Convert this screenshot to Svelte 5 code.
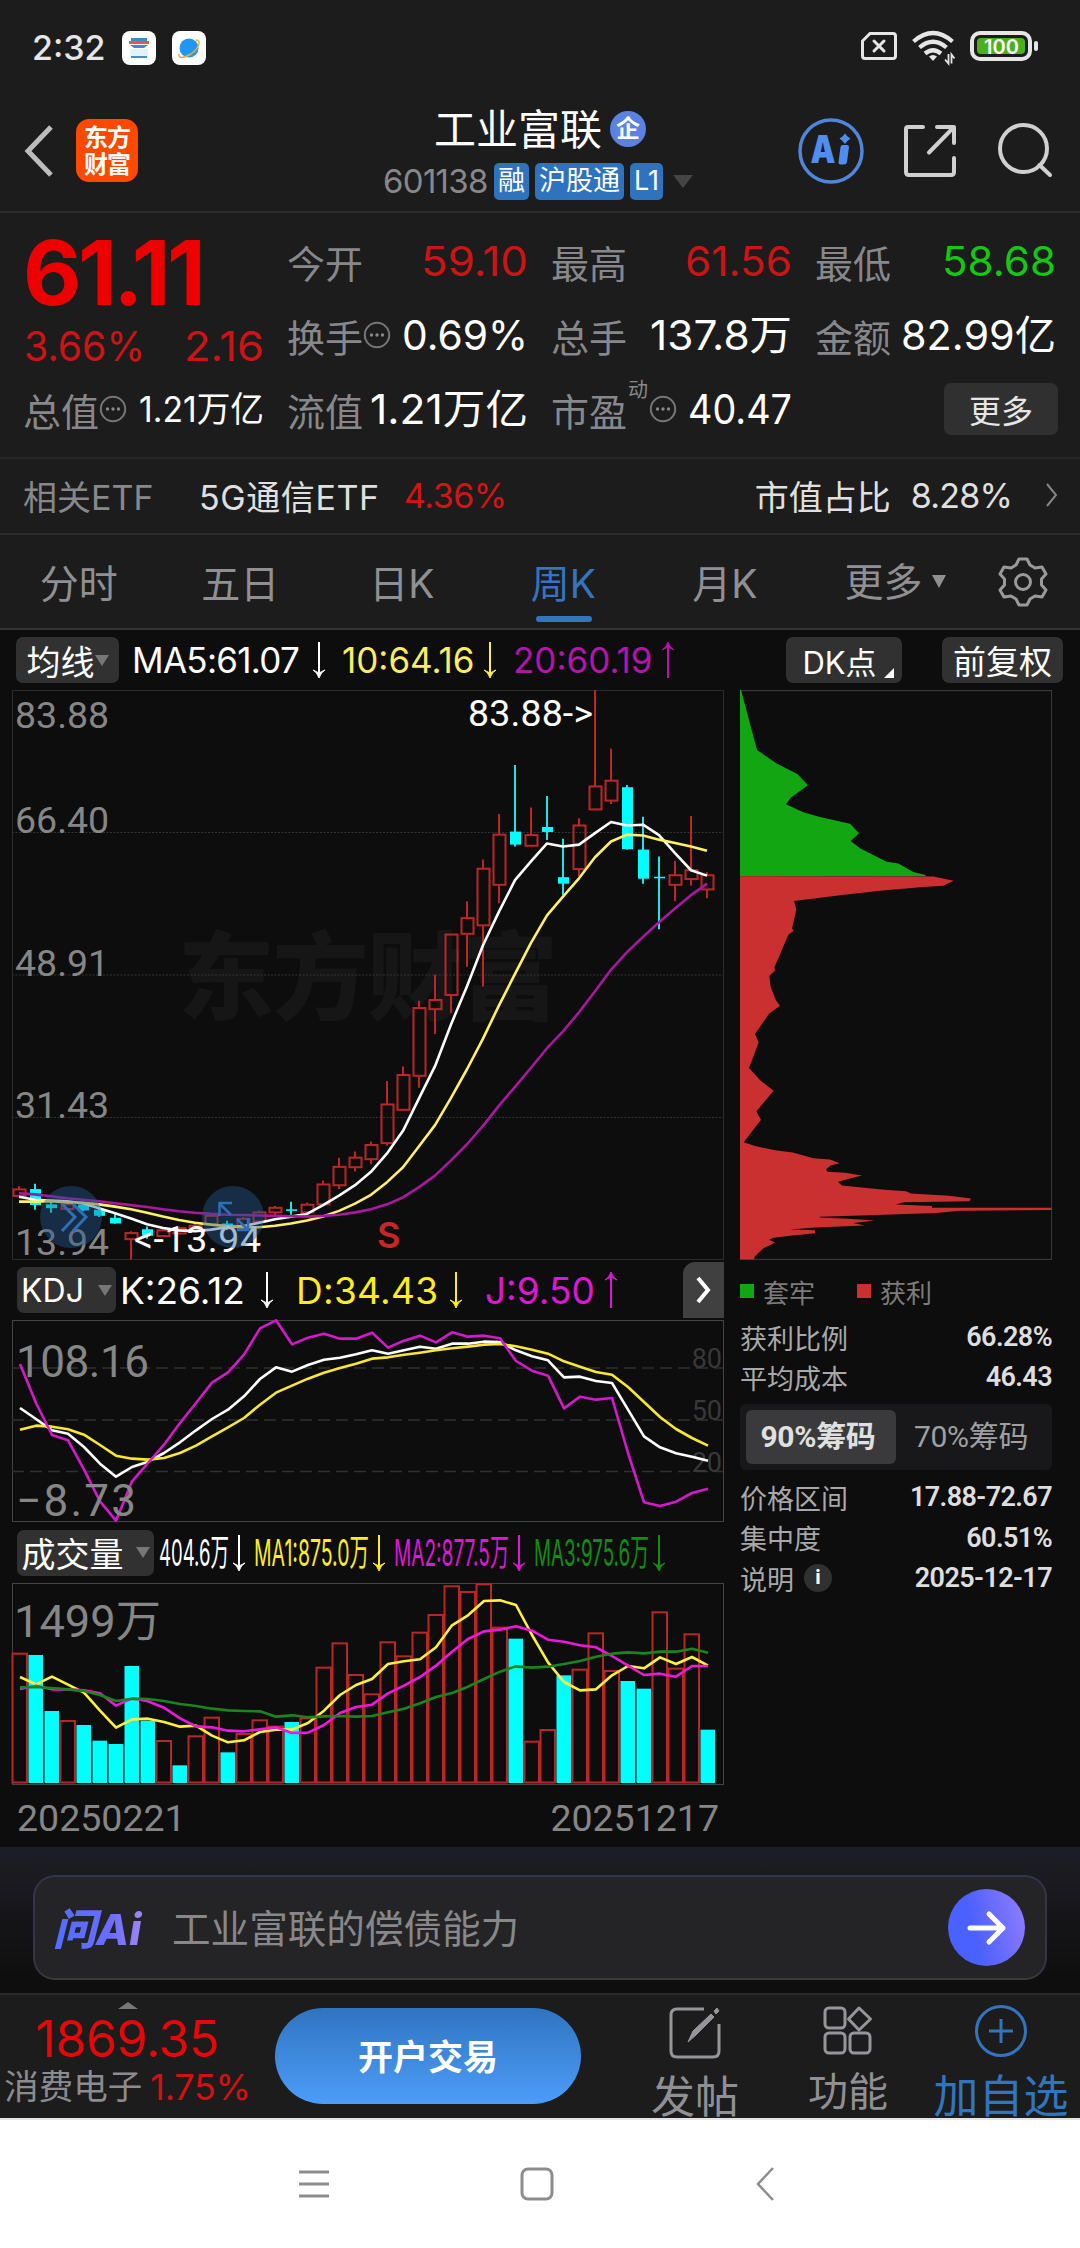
<script>
    // [high, body top, body bottom, low, rising]
    const candles = [
        [1323, 1331, 1348, 1350, 1], [1316, 1330, 1372, 1384, 0], [1364, 1370, 1380, 1392, 0], [1365, 1370, 1382, 1384, 1],
        [1368, 1370, 1386, 1388, 0], [1375, 1384, 1400, 1403, 0], [1396, 1405, 1420, 1421, 0], [1440, 1445, 1461, 1515, 1],
        [1428, 1435, 1452, 1460, 0], [1432, 1438, 1453, 1455, 1], [1428, 1432, 1446, 1448, 1], [1420, 1426, 1440, 1442, 1],
        [1395, 1400, 1422, 1424, 1], [1413, 1420, 1435, 1437, 0], [1403, 1408, 1432, 1434, 1], [1386, 1391, 1415, 1418, 1],
        [1374, 1379, 1391, 1398, 1], [1363, 1383, 1387, 1397, 0], [1365, 1371, 1391, 1395, 1], [1308, 1318, 1370, 1375, 1],
        [1248, 1272, 1320, 1330, 1], [1232, 1248, 1273, 1284, 1], [1206, 1215, 1252, 1265, 1], [1048, 1109, 1210, 1217, 1],
        [1010, 1032, 1123, 1125, 1], [838, 857, 1034, 1065, 1], [770, 836, 860, 925, 1], [664, 665, 823, 870, 1],
        [578, 622, 663, 749, 1], [469, 493, 641, 801, 1], [350, 404, 535, 583, 1], [222, 396, 430, 435, 0],
        [333, 405, 433, 434, 1], [303, 384, 397, 418, 0], [415, 515, 532, 562, 0], [361, 380, 494, 512, 1],
        [26, 278, 338, 340, 1], [179, 263, 315, 324, 1], [274, 280, 442, 443, 0], [357, 443, 519, 532, 0],
        [461, 514, 518, 651, 0], [472, 510, 535, 578, 1], [355, 497, 520, 537, 1], [502, 510, 547, 570, 1]
    ];
    const ma5 = [1350, 1358, 1360, 1362, 1367, 1380, 1393, 1407, 1422, 1432, 1438, 1440, 1436, 1430, 1427, 1418, 1409, 1402, 1395, 1372, 1347, 1320, 1285, 1237, 1178, 1093, 1009, 900, 800, 693, 605, 523, 474, 427, 435, 430, 400, 371, 380, 378, 405, 452, 497, 511];
    const ma10 = [1363, 1363, 1362, 1365, 1366, 1370, 1376, 1383, 1392, 1402, 1411, 1418, 1423, 1427, 1430, 1430, 1426, 1420, 1412, 1402, 1387, 1368, 1345, 1312, 1273, 1218, 1163, 1092, 1017, 937, 850, 768, 687, 615, 566, 518, 463, 422, 404, 406, 417, 426, 435, 446];
    const ma20 = [1341, 1344, 1349, 1354, 1358, 1362, 1367, 1372, 1377, 1383, 1388, 1392, 1395, 1397, 1398, 1399, 1400, 1401, 1402, 1400, 1397, 1391, 1383, 1370, 1352, 1325, 1295, 1255, 1213, 1165, 1112, 1063, 1013, 962, 918, 868, 813, 757, 711, 671, 633, 597, 562, 532];

    const kLine = [445, 478, 512, 522, 562, 612, 651, 622, 606, 580, 548, 512, 478, 450, 410, 358, 323, 336, 316, 300, 294, 284, 272, 282, 272, 261, 267, 252, 252, 246, 247, 272, 290, 302, 353, 351, 364, 370, 450, 530, 563, 581, 591, 603];
    const dLine = [510, 498, 501, 509, 525, 556, 588, 597, 600, 595, 580, 558, 530, 503, 475, 435, 399, 378, 357, 339, 325, 312, 297, 293, 285, 279, 272, 266, 261, 255, 253, 260, 270, 282, 305, 321, 337, 345, 382, 427, 472, 508, 535, 558];
    const jLine = [313, 430, 526, 542, 630, 725, 783, 665, 610, 555, 490, 430, 369, 338, 285, 206, 182, 254, 234, 222, 237, 237, 219, 264, 243, 228, 248, 218, 231, 228, 236, 304, 333, 348, 446, 411, 420, 415, 580, 728, 739, 726, 700, 687];

    const volumes = [246, 253, 421, 448, 463, 510, 520, 286, 450, 508, 584, 494, 438, 545, 487, 446, 465, 454, 440, 288, 215, 310, 368, 212, 254, 183, 130, 44, 61, 38, 168, 204, 510, 475, 314, 294, 185, 298, 331, 354, 122, 291, 188, 477];
    const falling = [1, 2, 4, 5, 6, 7, 8, 10, 13, 17, 31, 34, 38, 39, 43];
    const vol1 = [319, 341, 318, 342, 366, 420, 471, 446, 444, 454, 468, 465, 495, 515, 509, 484, 477, 477, 457, 420, 373, 343, 325, 280, 272, 266, 230, 164, 134, 91, 89, 103, 193, 275, 334, 359, 356, 314, 286, 293, 260, 280, 259, 285];
    const vol2 = [355, 345, 356, 356, 359, 368, 405, 383, 392, 411, 443, 467, 470, 480, 482, 476, 470, 487, 486, 463, 427, 409, 402, 368, 345, 319, 285, 243, 205, 182, 177, 167, 180, 207, 213, 224, 230, 256, 285, 313, 309, 318, 286, 286];
    const vol3 = [350, 349, 352, 356, 361, 373, 391, 384, 385, 391, 400, 406, 414, 419, 421, 422, 438, 434, 440, 437, 436, 438, 436, 425, 414, 398, 379, 367, 348, 325, 303, 287, 291, 288, 280, 271, 258, 249, 245, 248, 243, 243, 234, 246];

    const trapped = '60,26 63,26 111,183 170,218 232,246 264,275 212,308 198,325 250,346 300,358 390,376 417,401 392,421 420,440 500,475 535,480 580,502 617,510 617,513 60,513';
    const profit = '60,513 640,514 701,525 670,538 600,542 480,551 360,563 222,578 229,600 216,650 221,656 205,666 163,752 165,760 148,774 152,803 168,838 180,852 147,873 105,926 116,948 87,1015 122,1048 161,1074 109,1128 123,1150 71,1209 105,1219 165,1230 218,1236 280,1251 330,1254 359,1264 331,1270 318,1280 322,1286 375,1289 426,1296 381,1306 354,1313 366,1322 432,1328 494,1333 558,1337 573,1343 687,1349 753,1356 748,1363 552,1366 528,1372 636,1376 636,1380 995,1380 995,1386 720,1388 648,1394 470,1399 299,1404 299,1406 384,1409 464,1414 400,1420 434,1427 285,1432 210,1437 285,1439 285,1447 218,1453 160,1459 147,1464 166,1471 130,1486 118,1496 103,1509 103,1515 60,1515';

    // main chart: data range 26..1516 over 570px
    const py = (v) => (v - 26) / 2.613;
    const priceLine = (values) => values.map((v, i) => `${7 + i * 16},${py(v)}`).join(' ');
    const line = (values, top) => values.map((v, i) => `${8 + i * 16},${(v - top) / 3}`).join(' ');

    const tabs = ['分时', '五日', '日K', '周K', '月K'];
    const priceLabels = [['83.88', 38], ['66.40', 143], ['48.91', 285.5], ['31.43', 428], ['13.94', 565]];
</script>

{#snippet arrow(up)}
    <svg class="arrow" class:up width="14" height="36" viewBox="0 0 14 36" fill="none" stroke="currentColor" stroke-width="2">
        <path d="M7 0V34" />
        <path d="M1 28Q5 30 7 36Q9 30 13 28L7 31Z" fill="currentColor" stroke-width="1" />
    </svg>
{/snippet}

{#snippet info()}
    <svg class="info" width="28" height="30" viewBox="0 0 28 30">
        <circle cx="14" cy="15" r="12.2" fill="none" stroke="#77777a" stroke-width="2" />
        <circle cx="8.5" cy="15" r="1.7" fill="#88888c" />
        <circle cx="14" cy="15" r="1.7" fill="#88888c" />
        <circle cx="19.5" cy="15" r="1.7" fill="#88888c" />
    </svg>
{/snippet}

{#snippet narrow(text, width)}
    <svg {width} height="44">
        <text x="0" y="35" textLength={width} lengthAdjust="spacingAndGlyphs" fill="currentColor">{text}</text>
    </svg>
{/snippet}

{#snippet num(text, width)}
    <svg class="num" {width} height="50">
        <text x="0" y="40" textLength={width} lengthAdjust="spacingAndGlyphs" fill="currentColor">{text}</text>
    </svg>
{/snippet}

<div class="screen">
    <div class="status">
        <span class="clock">2:32</span>
        <svg width="34" height="34" viewBox="0 0 34 34">
            <rect width="34" height="34" rx="8" fill="#fff" />
            <path d="M9 7H25V12H9Z" fill="#3c8ad0" />
            <path d="M7 10H27V13H7Z" fill="#e8574a" />
            <path d="M8 14H26L22 17H12Z" fill="#4c83cc" />
            <path d="M8 18H26V26H8Z" fill="#e4f3fa" />
            <path d="M9 25H25V27H9Z" fill="#3f97bd" />
        </svg>
        <svg class="planet" width="34" height="34" viewBox="0 0 34 34">
            <rect width="34" height="34" rx="8" fill="#fff" />
            <circle cx="17" cy="17" r="9.5" fill="#2196f3" />
            <path d="M24 9C30 9 27 17 19 23C12 27 6 28 7 23" fill="none" stroke="#e2b13c" stroke-width="1.5" />
        </svg>
        <svg class="signals" width="180" height="36" viewBox="860 31 180 36">
            <path d="M870 34.500H893Q895.500 34.500 895.500 37V57Q895.500 59.500 893 59.500H865Q862.500 59.500 862.500 57V42Z" fill="none" stroke="#e6e6e6" stroke-width="3" />
            <path d="M874 42L884 52M884 42L874 52" stroke="#e6e6e6" stroke-width="3" stroke-linecap="round" />
            <g fill="none" stroke="#e6e6e6" stroke-width="4.200">
                <path d="M913.500 42.500Q933 25.500 952.500 42.500" />
                <path d="M919.500 48.500Q933 37 946.500 48.500" />
                <path d="M925 54.500Q933 48 941 54.500" />
            </g>
            <path d="M929 57.500Q933 54.500 937 57.500L933 62Z" fill="#e6e6e6" />
            <path d="M948.500 55V64.500L945 60.500M951.500 64.500V55.500L954.500 59.500" fill="none" stroke="#e6e6e6" stroke-width="1.800" />
            <rect x="972" y="34" width="58" height="26" rx="8" fill="none" stroke="#e6e6e6" stroke-width="4" />
            <rect x="977" y="39" width="48" height="16" rx="4" fill="#4caf1d" />
            <rect x="1034" y="42" width="4" height="10" rx="2" fill="#e6e6e6" />
            <text x="1001.500" y="54.500" text-anchor="middle" class="battery">100</text>
        </svg>
    </div>

    <header>
        <svg width="30" height="52" viewBox="0 0 30 52" fill="none" stroke="#bdbdbd" stroke-width="5">
            <path d="M27 2L4 26L27 50" />
        </svg>
        <div class="logo"><span>东方</span><span>财富</span></div>
        <div class="stock">
            <div class="name">工业富联<i>企</i></div>
            <div class="code">
                <span>601138</span><b>融</b><b>沪股通</b><b>L1</b>
                <svg width="20" height="13"><path d="M0 0H20L10 13Z" fill="#444" /></svg>
            </div>
        </div>
        <svg class="tools" width="260" height="70" viewBox="796 116 260 70" fill="none" stroke="#d0d0d0" stroke-width="4" stroke-linejoin="round">
            <circle cx="831" cy="151" r="31" stroke="#4f86da" stroke-width="3.500" />
            <text x="810.500" y="162.500" class="ai" textLength="25" lengthAdjust="spacingAndGlyphs">A</text>
            <path d="M840.500 147Q840.500 145 843 145H847Q849 145 849 147L847 162Q846.500 164.500 844 164.500H840.500Q838.500 164.500 838.500 162.500Z" fill="#4f8df0" stroke="none" />
            <path d="M845 133.500L847.500 136.500L850.500 138.500L847.500 141L845 144L842.500 141L839.500 138.500L842.500 136.500Z" fill="#4f8df0" stroke="none" />
            <path d="M923 127H908Q906 127 906 129V172Q906 175 909 175H951Q954 175 954 172V158" stroke-linecap="round" />
            <path d="M937 127H954V143M953 128L929 152.500" stroke-linecap="round" />
            <circle cx="1023.500" cy="148.500" r="23.500" />
            <path d="M1039.500 165L1050 175" stroke-linecap="round" />
        </svg>
    </header>

    <section class="quote">
        <div class="last">
            <strong>61.11</strong>
            <div class="cell red change">{@render num('3.66%', 121)}{@render num('2.16', 80)}</div>
        </div>
        <div class="cell"><label>今开</label><span class="red">{@render num('59.10', 107)}</span></div>
        <div class="cell"><label>最高</label><span class="red">{@render num('61.56', 107)}</span></div>
        <div class="cell"><label>最低</label><span class="green">{@render num('58.68', 114)}</span></div>
        <div class="cell"><label>换手</label>{@render info()}<span>{@render num('0.69%', 126)}</span></div>
        <div class="cell"><label>总手</label><span>{@render num('137.8万', 142)}</span></div>
        <div class="cell"><label>金额</label><span>{@render num('82.99亿', 155)}</span></div>
        <div class="cell"><label>总值</label>{@render info()}<span class="small">{@render num('1.21万亿', 125)}</span></div>
        <div class="cell"><label>流值</label><span>{@render num('1.21万亿', 158)}</span></div>
        <div class="cell"><label class="pe">市盈<sup>动</sup></label>{@render info()}<span>{@render num('40.47', 104)}</span></div>
        <button class="more">更多</button>
    </section>

    <section class="etf">
        <span class="muted">相关ETF</span>
        <span class="etf-name">5G通信ETF</span>
        <span class="red">4.36%</span>
        <span class="ratio">市值占比</span>
        <span class="share">8.28%</span>
        <svg width="12" height="24" viewBox="0 0 12 24" fill="none" stroke="#85858a" stroke-width="2"><path d="M1 1L10 12L1 23" /></svg>
    </section>

    <nav class="tabs">
        {#each tabs as tab, i}
            <span class:active={i === 3}>{tab}</span>
        {/each}
        <span class="tab-more">更多<svg width="14" height="13"><path d="M0 0H14L7 13Z" fill="#909090" /></svg></span>
        <svg class="gear" width="50" height="50" viewBox="-25 -25 50 50" fill="none" stroke="#9a9a9a" stroke-width="3" stroke-linejoin="round">
            <path d="M-4 -23H4L7 -17L12 -14L19 -15L23 -8L18.500 -3V3L23 8L19 15L12 14L7 17L4 23H-4L-7 17L-12 14L-19 15L-23 8L-18.500 3V-3L-23 -8L-19 -15L-12 -14L-7 -17Z" />
            <circle r="7.500" />
        </svg>
    </nav>

    <main>
        <div class="ma-row">
            <button class="pick ma">均线<svg width="14" height="11"><path d="M0 0H14L7 11Z" fill="#777" /></svg></button>
            <span class="m5">MA5:61.07</span>{@render arrow(false)}
            <span class="m10 yellow">10:64.16</span><i class="yellow">{@render arrow(false)}</i>
            <span class="m20 purple">20:60.19</span><i class="purple">{@render arrow(true)}</i>
            <button class="pick dk">DK点<svg width="10" height="10"><path d="M10 0V10H0Z" fill="#fff" /></svg></button>
            <button class="pick fq">前复权</button>
        </div>

        <div class="columns">
            <div class="left">
                <svg class="plot" width="712" height="570">
                    <text class="watermark" x="166" y="322" textLength="380">东方财富</text>
                    {#each [142.5, 285, 427.5] as y}
                        <line x1="0" x2="711" y1={y} y2={y} stroke="#343434" stroke-dasharray="2 1.500" />
                    {/each}
                    <rect x=".5" y=".5" width="711" height="569" fill="none" stroke="#2b2b2b" />
                    {#each candles as [high, top, bottom, low, rising], i}
                        {@const x = 7 + i * 16}
                        {#if rising}
                            <path d="M{x} {py(high)}V{py(top)}M{x} {py(bottom)}V{py(low)}" stroke="#bc2626" stroke-width="2" />
                            <rect x={x - 5.5} y={py(top)} width="12" height={(bottom - top) / 2.613} fill="none" stroke="#bc2626" stroke-width="2" />
                        {:else}
                            <path d="M{x} {py(high)}V{py(low)}" stroke="#20e4e4" stroke-width="2" />
                            <rect x={x - 5} y={py(top)} width="11" height={(bottom - top) / 2.613} fill="#00ffff" />
                        {/if}
                    {/each}
                    <text class="s" x="365" y="558">S</text>
                    <polyline points={priceLine(ma5)} stroke="#fff" />
                    <polyline points={priceLine(ma10)} stroke="#fff066" />
                    <polyline points={priceLine(ma20)} stroke="#a818a0" />
                    {#each priceLabels as [label, y]}
                        <text class="price" x="3" {y}>{label}</text>
                    {/each}
                    <text class="mark" x="456" y="36" textLength="125">83.88-&gt;</text>
                    <text class="mark" x="122" y="562" textLength="127">&lt;-13.94</text>
                    <circle cx="59" cy="527" r="31" fill="#245a94" fill-opacity=".42" />
                    <circle cx="221" cy="527" r="31" fill="#245a94" fill-opacity=".42" />
                    <g fill="none" stroke="#2d6fb9" stroke-width="3">
                        <path d="M50 514L63 527L50 541M61 514L74 527L61 541" />
                        <path d="M220 513H207.500V526M208 514L219 525M225 540H236V528M236 540L225 529" stroke-width="2.500" />
                    </g>
                </svg>

                <div class="kdj-row">
                    <button class="pick kdj">KDJ<svg width="14" height="11"><path d="M0 0H14L7 11Z" fill="#777" /></svg></button>
                    <span class="k">K:26.12</span>{@render arrow(false)}
                    <span class="d yellow2">D:34.43</span><i class="yellow2">{@render arrow(false)}</i>
                    <span class="j magenta">J:9.50</span><i class="magenta">{@render arrow(true)}</i>
                    <button class="next"><svg width="16" height="28" viewBox="0 0 16 28" fill="none" stroke="#fff" stroke-width="4"><path d="M2 2L12 14L2 26" /></svg></button>
                </div>

                <svg class="plot" width="712" height="202">
                    <rect x=".5" y=".5" width="711" height="201" fill="none" stroke="#444" />
                    {#each [[80, 48], [50, 100], [20, 151.5]] as [level, y]}
                        <line x1="0" x2="711" y1={y} y2={y} stroke="#303030" stroke-width="1.500" stroke-dasharray="12 6" />
                        <text class="level" x="710" {y}>{level}</text>
                    {/each}
                    <polyline points={line(kLine, 181)} stroke="#fff" />
                    <polyline points={line(dLine, 181)} stroke="#f8e830" />
                    <polyline points={line(jLine, 181)} stroke="#d418cc" />
                    <text class="big" x="4" y="57" textLength="133">108.16</text>
                    <text class="big" x="4" y="196" textLength="120">−8.73</text>
                </svg>

                <div class="vol-row">
                    <button class="pick vol">成交量<svg width="14" height="11"><path d="M0 0H14L7 11Z" fill="#777" /></svg></button>
                    <span>{@render narrow('404.6万', 70)}{@render arrow(false)}</span>
                    <span class="yellow2">{@render narrow('MA1:875.0万', 115)}{@render arrow(false)}</span>
                    <span class="magenta">{@render narrow('MA2:877.5万', 115)}{@render arrow(false)}</span>
                    <span class="dark-green">{@render narrow('MA3:975.6万', 115)}{@render arrow(false)}</span>
                </div>

                <svg class="plot" width="712" height="202">
                    <rect x=".5" y=".5" width="711" height="201" fill="none" stroke="#444" />
                    {#each volumes as v, i}
                        {@const y = (v - 37) / 3}
                        {#if falling.includes(i)}
                            <rect x={i * 16 + 0.5} {y} width="14.500" height={200 - y} fill="#00ffff" />
                        {:else}
                            <rect x={i * 16 + 0.5} y={y + 1} width="14.500" height={198.5 - y} fill="none" stroke="#b82626" stroke-width="2" />
                        {/if}
                    {/each}
                    <polyline points={line(vol1, 37)} stroke="#fff03c" />
                    <polyline points={line(vol2, 37)} stroke="#ee18dc" />
                    <polyline points={line(vol3, 37)} stroke="#1c841c" />
                    <text class="big" x="2" y="54" textLength="147" lengthAdjust="spacingAndGlyphs">1499万</text>
                </svg>
                <div class="dates"><span>20250221</span><span>20251217</span></div>
            </div>

            <aside>
                <svg width="312" height="570" viewBox="60 26 936 1491" preserveAspectRatio="none">
                    <rect x="61.500" y="27.500" width="933" height="1488" fill="none" stroke="#383838" stroke-width="3" />
                    <polygon points={trapped} fill="#12a612" />
                    <polygon points={profit} fill="#cb3030" />
                </svg>
                <div class="legend"><i class="g"></i>套牢<i class="r"></i>获利</div>
                <dl>
                    <dt>获利比例</dt><dd>66.28%</dd>
                    <dt>平均成本</dt><dd>46.43</dd>
                </dl>
                <div class="segment"><span class="on">90%筹码</span><span>70%筹码</span></div>
                <dl class="lower">
                    <dt>价格区间</dt><dd>17.88-72.67</dd>
                    <dt>集中度</dt><dd>60.51%</dd>
                    <dt>说明<b>i</b></dt><dd>2025-12-17</dd>
                </dl>
            </aside>
        </div>
    </main>

    <section class="ask">
        <div class="ask-box">
            <span class="ask-logo">问Ai</span>
            <span class="question">工业富联的偿债能力</span>
            <button class="send">
                <svg width="40" height="34" viewBox="0 0 40 34" fill="none" stroke="#fff" stroke-width="5" stroke-linecap="round" stroke-linejoin="round"><path d="M3 17H36M22 3L36 17L22 31" /></svg>
            </button>
        </div>
    </section>

    <footer>
        <div class="index">
            <svg width="20" height="7"><path d="M0 7H20L10 0Z" fill="#77777a" /></svg>
            <strong>1869.35</strong>
            <div><span>消费电子</span><em>1.75%</em></div>
        </div>
        <button class="open">开户交易</button>
        <div class="action post">
            <svg width="54" height="54" viewBox="0 0 54 54" fill="none" stroke="#96969a" stroke-width="3">
                <path d="M36 3H9Q3 3 3 9V45Q3 51 9 51H45Q51 51 51 45V18" />
                <path d="M20 36L25 25L43 8L46 11L28 29ZM46 5L49 2L51 5L48 8Z" fill="#96969a" stroke-width="1" />
            </svg>
            <span>发帖</span>
        </div>
        <div class="action func">
            <svg width="50" height="50" viewBox="0 0 50 50" fill="none" stroke="#96969a" stroke-width="3">
                <rect x="2" y="2" width="20" height="20" rx="4" />
                <rect x="2" y="27" width="20" height="20" rx="4" />
                <rect x="27" y="27" width="20" height="20" rx="4" />
                <path d="M36 2L47.500 13L36 24L25.500 13Z" stroke-linejoin="round" />
            </svg>
            <span>功能</span>
        </div>
        <div class="action add">
            <svg width="54" height="54" viewBox="0 0 54 54" fill="none" stroke="#3274bd" stroke-width="3">
                <circle cx="27" cy="27" r="24.500" />
                <path d="M27 15V39M15 27H39" />
            </svg>
            <span>加自选</span>
        </div>
    </footer>

    <div class="system">
        <svg width="30" height="28" stroke="#8c8c8c" stroke-width="3"><path d="M0 2H30M0 14H30M0 26H30" /></svg>
        <svg width="34" height="34" fill="none" stroke="#8c8c8c" stroke-width="3"><rect x="2" y="2" width="30" height="30" rx="6" /></svg>
        <svg width="18" height="34" fill="none" stroke="#8c8c8c" stroke-width="2.500"><path d="M17 1L2 17L17 33" /></svg>
    </div>
</div>

<style>
    :global(body) {
        background: #1c1c1c;
    }

    .screen {
        width: 1080px;
        height: 2248px;
        overflow: hidden;
        background: #1c1c1c;
        color: #fff;
        font-family: Inter, "Noto Sans CJK SC", sans-serif;
        font-weight: 400;
        white-space: nowrap;
    }

    .screen * {
        box-sizing: border-box;
    }

    svg {
        display: block;
        flex: none;
        overflow: visible;
    }

    button {
        padding: 0;
        border: 0;
        color: inherit;
        font: inherit;
        display: flex;
        align-items: center;
        justify-content: center;
        flex: none;
    }

    i, em {
        font-style: normal;
    }

    polyline {
        fill: none;
        stroke-width: 2.6;
        stroke-linejoin: round;
    }

    .red { color: #cc1414; }
    .green { color: #14c814; }
    .yellow { color: #fcec60; }
    .yellow2 { color: #fcec20; }
    .purple { color: #b414ac; }
    .magenta { color: #dc18d4; }
    .dark-green { color: #148c14; }

    .status {
        height: 95px;
        display: flex;
        align-items: center;
        padding: 0 40px 0 32px;
    }

    .clock {
        width: 90px;
        font-size: 34px;
        font-weight: 500;
        color: #e6e6e6;
    }

    .planet {
        margin-left: 16px;
    }

    .signals {
        margin-left: auto;
    }

    .battery {
        font: 600 20px Inter, sans-serif;
        fill: #fff;
    }

    header {
        height: 118px;
        display: flex;
        align-items: center;
        padding: 0 24px 5px;
        border-bottom: 2px solid #2c2c2c;
    }

    .logo {
        width: 62px;
        height: 63px;
        margin-left: 22px;
        border-radius: 13px;
        background: #ff4800;
        display: flex;
        flex-direction: column;
        align-items: center;
        justify-content: center;
        font-size: 24px;
        font-weight: 700;
        line-height: 27px;
        letter-spacing: -1px;
    }

    .stock {
        width: 310px;
        margin: 5px 0 0 245px;
    }

    .name {
        display: flex;
        align-items: center;
        padding-left: 51px;
        font-size: 42px;
        line-height: 48px;
    }

    .name i {
        width: 36px;
        height: 36px;
        margin: -3px 0 0 8px;
        border-radius: 50%;
        background: #5b82e2;
        font-size: 24px;
        font-weight: 700;
        line-height: 35px;
        text-align: center;
    }

    .code {
        display: flex;
        align-items: center;
        gap: 6px;
        margin-top: 9px;
        font-size: 33px;
        line-height: 37px;
        color: #88888c;
    }

    .code span {
        width: 106px;
        letter-spacing: -.7px;
    }

    .code b {
        height: 37px;
        padding: 0 4px;
        border-radius: 5px;
        background: #2f72bd;
        color: #fff;
        font-size: 27px;
        font-weight: 400;
        line-height: 36px;
    }

    .code svg {
        margin-left: 4px;
    }

    .tools {
        margin-left: auto;
    }

    .ai {
        font: 900 38px Inter, sans-serif;
        fill: #4f8df0;
        stroke: none;
    }

    .quote {
        height: 246px;
        display: grid;
        grid-template-columns: repeat(4, 239px);
        grid-template-rows: 74px 74px 74px;
        column-gap: 25px;
        padding: 11px 24px 0 25px;
        border-bottom: 2px solid #272727;
    }

    .last {
        grid-row: span 2;
    }

    .last strong {
        display: block;
        height: 98px;
        margin-left: -2px;
        color: #ee0000;
        font-size: 90px;
        font-weight: 700;
        line-height: 98px;
        letter-spacing: -3.5px;
    }

    .cell {
        display: flex;
        align-items: center;
        font-size: 41px;
    }

    .cell > span, .change .num:last-child {
        margin-left: auto;
    }

    .cell label {
        margin-left: -2px;
        color: #88888c;
        font-size: 38px;
        position: relative;
    }

    .cell .pe {
        padding-right: 22px;
    }

    .cell sup {
        position: absolute;
        left: 77px;
        top: -4px;
        font-size: 20px;
        line-height: 24px;
    }

    .cell .small {
        font-size: 35px;
    }

    .small .num {
        height: 54px;
    }

    .cell.change {
        height: 48px;
    }

    .change .num:first-child {
        margin-left: -1px;
    }

    .more {
        justify-self: end;
        align-self: center;
        width: 114px;
        height: 52px;
        margin-right: -2px;
        border-radius: 7px;
        background: #303030;
        color: #e6e6e6;
        font-size: 32px;
    }

    .etf {
        height: 76px;
        display: flex;
        align-items: center;
        padding: 0 22px 2px 23px;
        border-bottom: 2px solid #2c2c2c;
        font-size: 34px;
        color: #e0e0e0;
    }

    .muted {
        width: 176px;
        color: #88888c;
    }

    .etf-name {
        width: 205px;
        letter-spacing: .6px;
    }

    .etf .red {
        color: #d41414;
        letter-spacing: -.5px;
    }

    .ratio {
        margin-left: auto;
        margin-right: 20px;
    }

    .share {
        letter-spacing: -.8px;
    }

    .etf svg {
        margin-left: 34px;
    }

    .tabs {
        height: 95px;
        display: flex;
        align-items: center;
        border-bottom: 2px solid #333;
        color: #909094;
        font-size: 39px;
    }

    .tabs > span {
        width: 161.500px;
        height: 93px;
        line-height: 98px;
        text-align: center;
        position: relative;
        left: -2px;
    }

    .tabs .active {
        color: #3574be;
    }

    .active::after {
        content: "";
        position: absolute;
        left: 53px;
        bottom: 6px;
        width: 56px;
        height: 6px;
        border-radius: 3px;
        background: #3574be;
    }

    .tabs .tab-more {
        display: flex;
        align-items: center;
        gap: 9px;
        padding-left: 39px;
    }

    .gear {
        margin-left: 29px;
    }

    main {
        height: 1217px;
        background: #0d0d0d;
    }

    .pick {
        height: 46px;
        border-radius: 7px;
        background: #313131;
        font-size: 33px;
    }

    .ma-row {
        height: 60px;
        display: flex;
        align-items: center;
        padding-left: 16px;
        font-size: 35px;
    }

    .ma-row > .arrow, .ma-row i {
        margin-right: 16px;
    }

    .up {
        transform: rotate(180deg);
    }

    .ma { width: 103px; margin-right: 13px; font-size: 34px; }
    .m5 { width: 180px; letter-spacing: -.7px; }
    .m10 { width: 141px; }
    .m20 { width: 148px; }

    .dk {
        width: 116px;
        margin-left: 95px;
        gap: 7px;
        font-size: 31px;
    }

    .dk svg {
        margin: 26px -8px 0 0;
    }

    .fq {
        width: 121px;
        margin-left: 40px;
        font-size: 33px;
    }

    .columns {
        display: flex;
        gap: 16px;
        padding-left: 12px;
    }

    .left {
        width: 712px;
    }

    .price, .mark {
        font: 37.5px Roboto, sans-serif;
        fill: #868686;
    }

    .mark {
        fill: #fff;
    }

    .watermark {
        font-size: 96px;
        font-weight: 900;
        fill: #161616;
    }

    .s {
        font-size: 36px;
        font-weight: 600;
        fill: #c82626;
    }

    .big {
        font: 44px Roboto, "Noto Sans CJK SC", sans-serif;
        fill: #868686;
    }

    .level {
        font: 27px Roboto, sans-serif;
        fill: #383838;
        text-anchor: end;
    }

    .kdj-row {
        height: 60px;
        display: flex;
        align-items: center;
        font-size: 37px;
    }

    .kdj { width: 99px; margin: 0 4px 0 5px; gap: 14px; font-size: 32px; }
    .k { width: 140px; }
    .d { width: 153px; letter-spacing: .3px; }
    .j { width: 119px; }

    .kdj-row > .arrow, .kdj-row i {
        margin-right: 22px;
    }

    .next {
        width: 41px;
        height: 56px;
        margin-left: auto;
        border-radius: 12px 0 0 0;
        background: #404040;
    }

    .vol-row {
        height: 61px;
        display: flex;
        align-items: center;
        gap: 8px;
        padding-left: 5px;
        font-size: 37px;
    }

    .vol {
        width: 137px;
        margin-right: -3px;
        gap: 12px;
        font-size: 34px;
    }

    .vol-row span {
        display: flex;
        align-items: center;
        gap: 3px;
    }

    .dates {
        display: flex;
        justify-content: space-between;
        padding: 11px 5px 0 5px;
        font: 37.5px/44px Roboto, sans-serif;
        color: #868686;
    }

    aside {
        width: 312px;
    }

    .legend {
        height: 54px;
        display: flex;
        align-items: center;
        padding-top: 8px;
        color: #7c7c7c;
        font-size: 26px;
    }

    .legend i {
        width: 14px;
        height: 14px;
        margin-right: 9px;
    }

    .g { background: #12a612; }
    .r { background: #cb3030; margin-left: 42px; }

    dl {
        display: grid;
        grid-template-columns: auto auto;
        grid-auto-rows: 40px;
        align-items: center;
        margin: 3px 0 0;
        color: #a8a8a8;
        font-size: 27px;
    }

    dt {
        display: flex;
        align-items: center;
    }

    dt b {
        width: 28px;
        height: 28px;
        margin-left: 10px;
        border-radius: 50%;
        background: #303030;
        color: #fff;
        font-size: 20px;
        line-height: 27px;
        text-align: center;
    }

    dd {
        margin: 0;
        text-align: right;
        color: #dedede;
        font: 600 27px Roboto, sans-serif;
        letter-spacing: -.6px;
    }

    .segment {
        height: 66px;
        display: flex;
        margin-top: 7px;
        padding: 6px;
        border-radius: 6px;
        background: #18181a;
        color: #a0a0a0;
        font: 30px/54px Roboto, "Noto Sans CJK SC", sans-serif;
    }

    .segment span {
        width: 150px;
        text-align: center;
        letter-spacing: -.3px;
    }

    .segment .on {
        padding-right: 6px;
        border-radius: 6px;
        background: #3a3a3c;
        color: #e0e0e0;
        font-weight: 700;
    }

    dl.lower {
        grid-auto-rows: 40.5px;
        margin-top: 7px;
    }

    .ask {
        height: 146px;
        padding: 28px 33px 0;
        background: linear-gradient(#1e1e26, #0e0e0e 90%);
    }

    .ask-box {
        height: 105px;
        display: flex;
        align-items: center;
        padding: 0 20px;
        border: 2px solid #34344a;
        border-bottom-color: #3a3a3a;
        border-radius: 22px;
        background: #242426;
    }

    .ask-logo {
        width: 118px;
        margin: -3px 0 0 -3px;
        padding-left: 1px;
        background: linear-gradient(90deg, #4f6eff, #6a6cff 50%, #a58cf0 80%);
        background-clip: text;
        color: transparent;
        font-size: 43px;
        font-style: italic;
        font-weight: 800;
    }

    .question {
        margin: -4px 0 0 2px;
        color: #88888a;
        font-size: 38.6px;
    }

    .send {
        width: 77px;
        height: 77px;
        margin-left: auto;
        border-radius: 50%;
        background: linear-gradient(75deg, #4a60ff 35%, #947eff);
    }

    footer {
        height: 125px;
        display: flex;
        border-top: 2px solid #2a2a2a;
    }

    .index {
        width: 255px;
        display: flex;
        flex-direction: column;
        align-items: center;
        padding-top: 7px;
    }

    .index strong {
        color: #e60808;
        font-size: 50px;
        font-weight: 400;
        line-height: 60px;
        letter-spacing: -.4px;
    }

    .index div {
        display: flex;
        gap: 8px;
        margin-top: -5px;
        font-size: 34.5px;
        line-height: 46px;
        color: #8c8c90;
    }

    .index em {
        color: #d41010;
        font-size: 36px;
        letter-spacing: -.3px;
    }

    .open {
        width: 306px;
        height: 96px;
        margin: 13px 0 0 20px;
        padding-bottom: 3px;
        border-radius: 48px;
        background: linear-gradient(#3074c0, #4c9df9);
        font-size: 35px;
        font-weight: 700;
    }

    .action {
        display: flex;
        flex-direction: column;
        align-items: center;
        color: #909094;
        font-size: 44px;
        line-height: 60px;
    }

    .post { width: 130px; margin-left: 49px; padding-top: 11px; }
    .func { width: 100px; margin-left: 38px; padding-top: 11px; font-size: 40px; }
    .add { width: 144px; margin-left: 31px; padding-top: 9px; color: #3274bd; font-size: 45px; }
    .post span { margin-top: 7px; height: 50px; }
    .func span { margin-top: 9px; line-height: 54px; }
    .add span { margin-top: 9px; height: 50px; }

    .system {
        height: 130px;
        display: flex;
        align-items: center;
        padding-left: 299px;
        border-top: 2px solid #e4e4e4;
        background: #fff;
        position: relative;
    }

    .system svg:nth-child(2) { margin-left: 191px; }
    .system svg:nth-child(3) { margin-left: 202px; }
</style>
